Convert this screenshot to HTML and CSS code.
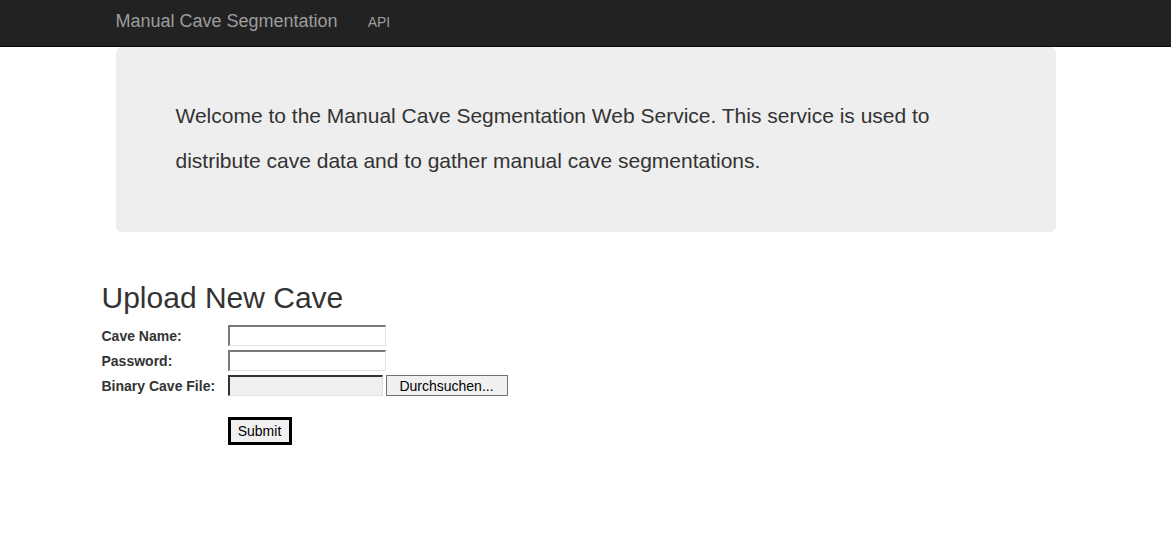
FILE: index.html
```html
<!DOCTYPE html>
<html>
<head>
<meta charset="utf-8">
<title>Manual Cave Segmentation</title>
<link rel="stylesheet" href="styles.css">
</head>
<body>
<nav class="navbar">
  <div class="container navbar-inner">
    <a class="brand" href="#">Manual Cave Segmentation</a>
    <a class="nav-link" href="#">API</a>
  </div>
</nav>
<div class="container">
  <div class="jumbotron">
    <p>Welcome to the Manual Cave Segmentation Web Service. This service is used to distribute cave data and to gather manual cave segmentations.</p>
  </div>
</div>
<div class="upload">
  <h2 class="upload-title">Upload New Cave</h2>
  <form class="upload-form">
    <label class="field-label" for="cname">Cave Name:</label>
    <div class="field"><input id="cname" class="text-input" type="text"></div>
    <label class="field-label" for="pw">Password:</label>
    <div class="field"><input id="pw" class="text-input" type="password"></div>
    <label class="field-label">Binary Cave File:</label>
    <div class="field file-field">
      <span class="file-box"></span>
      <span class="file-button">Durchsuchen...</span>
    </div>
    <span class="field-label"></span>
    <div class="field submit-row"><button class="submit-button" type="button">Submit</button></div>
  </form>
</div>
</body>
</html>
```

FILE: styles.css
```css
* { box-sizing: border-box; }
html, body { margin: 0; padding: 0; }
body {
  font-family: "Liberation Sans", Arial, Helvetica, sans-serif;
  font-size: 14px;
  color: #333;
  background: #fff;
}
.container {
  width: 970px;
  margin: 0 auto;
  padding: 0 15px;
}
.navbar {
  background: #222;
  border-bottom: 1px solid #080808;
  height: 47px;
}
.navbar-inner {
  display: flex;
  align-items: center;
  height: 42px;
}
.brand {
  font-size: 18px;
  color: #9d9d9d;
  text-decoration: none;
  line-height: 20px;
}
.nav-link {
  font-size: 14px;
  color: #9d9d9d;
  text-decoration: none;
  margin-left: 30px;
  line-height: 20px;
  margin-top: 1px;
}
.jumbotron {
  background: #eee;
  border-radius: 6px;
  padding: 46px 60px 49px;
}
.jumbotron p {
  margin: 0;
  font-size: 21px;
  line-height: 45px;
  color: #333;
}
.upload {
  width: 970px;
  margin: 0 auto;
  padding-left: 1px;
}
.upload-title {
  font-size: 30px;
  font-weight: normal;
  line-height: 33px;
  margin: 49px 0 11px;
  color: #333;
}
.upload-form {
  display: grid;
  grid-template-columns: 126px auto;
  row-gap: 4px;
  align-items: center;
  justify-items: start;
}
.field-label {
  font-size: 14px;
  font-weight: bold;
  color: #333;
}
.field { display: flex; }
.text-input {
  width: 158px;
  height: 21px;
  margin: 0;
  padding: 0 2px;
  border-style: solid;
  border-width: 2px 1px 1px 2px;
  border-color: #7a7a7a #e3e3e3 #e3e3e3 #7a7a7a;
  background: #fff;
  font: 14px "Liberation Sans", Arial, sans-serif;
}
.file-field { gap: 3px; }
.file-box {
  width: 155px;
  height: 21px;
  background: #efefef;
  border-style: solid;
  border-width: 2px 1px 1px 2px;
  border-color: #333 #e0e0e0 #e0e0e0 #333;
}
.file-button {
  width: 122px;
  height: 21px;
  background: #f0f0f0;
  border: 1px solid #707070;
  font-size: 14px;
  color: #000;
  display: flex;
  align-items: center;
  justify-content: center;
  padding-top: 1px;
}
.submit-row { margin-top: 17px; }
.submit-button {
  width: 64px;
  height: 28px;
  margin: 0;
  padding: 0;
  background: #f0f0f0;
  border: 3px solid #000;
  font: 14px "Liberation Sans", Arial, sans-serif;
  color: #000;
}
```
